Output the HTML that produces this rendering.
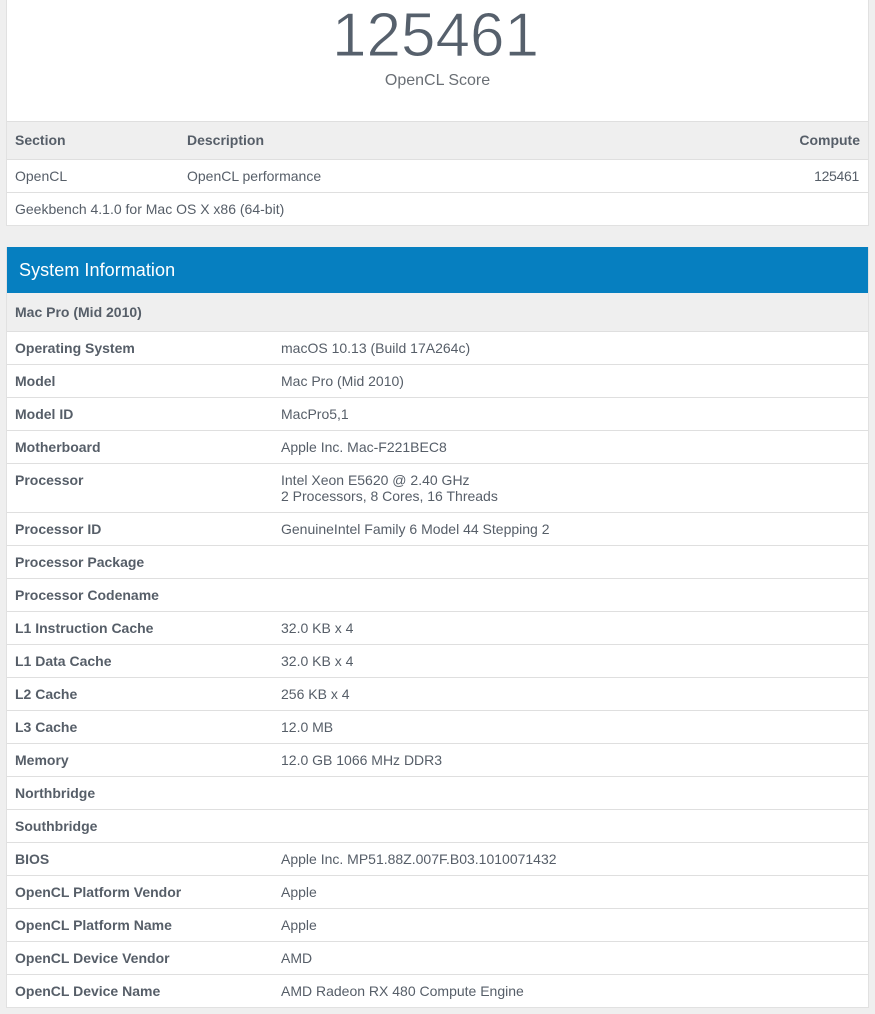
<!DOCTYPE html>
<html>
<head>
<meta charset="utf-8">
<style>
html,body{margin:0;padding:0;width:875px;height:1014px;overflow:hidden;background:#efefef;}
body{position:relative;font-family:"Liberation Sans",sans-serif;font-size:14px;color:#565e68;}
.a{position:absolute;}
.box{left:6px;width:861px;background:#fff;border:1px solid #e1e1e1;}
.l{position:absolute;left:7px;width:861px;height:1px;background:#dfdfdf;}
.t{position:absolute;white-space:nowrap;line-height:16px;}
.b{font-weight:bold;}
.k{left:15px;font-weight:bold;}
.v{left:281px;}
</style>
</head>
<body>
<div class="a box" style="top:-2px;height:226px;"></div>
<div class="a box" style="top:247px;height:759px;"></div>

<div class="t" style="left:-2px;width:875px;text-align:center;top:5px;font-size:62px;line-height:62px;color:#56606c;-webkit-text-stroke:0.9px #fff;">125461</div>
<div class="t" style="left:0;width:875px;text-align:center;top:73px;font-size:16px;color:#6a6f75;">OpenCL Score</div>

<div class="a" style="left:7px;top:122px;width:861px;height:37px;background:#efefef;"></div>
<div class="l" style="top:121px;"></div>
<div class="l" style="top:159px;"></div>
<div class="l" style="top:192px;"></div>
<div class="t b" style="left:15px;top:132px;">Section</div>
<div class="t b" style="left:187px;top:132px;">Description</div>
<div class="t b" style="right:15px;top:132px;">Compute</div>
<div class="t" style="left:15px;top:168px;">OpenCL</div>
<div class="t" style="left:187px;top:168px;">OpenCL performance</div>
<div class="t" style="right:16px;top:168px;letter-spacing:-0.3px;">125461</div>
<div class="t" style="left:15px;top:201px;">Geekbench 4.1.0 for Mac OS X x86 (64-bit)</div>

<div class="a" style="left:7px;top:247px;width:861px;height:46px;background:#067fc0;"></div>
<div class="t" style="left:19px;top:259px;font-size:18px;line-height:22px;color:#fff;letter-spacing:0.06px;">System Information</div>
<div class="a" style="left:7px;top:293px;width:861px;height:38px;background:#efefef;"></div>
<div class="t b" style="left:15px;top:304px;">Mac Pro (Mid 2010)</div>

<div class="l" style="top:331px;"></div>
<div class="l" style="top:364px;"></div>
<div class="l" style="top:397px;"></div>
<div class="l" style="top:430px;"></div>
<div class="l" style="top:463px;"></div>
<div class="l" style="top:512px;"></div>
<div class="l" style="top:545px;"></div>
<div class="l" style="top:578px;"></div>
<div class="l" style="top:611px;"></div>
<div class="l" style="top:644px;"></div>
<div class="l" style="top:677px;"></div>
<div class="l" style="top:710px;"></div>
<div class="l" style="top:743px;"></div>
<div class="l" style="top:776px;"></div>
<div class="l" style="top:809px;"></div>
<div class="l" style="top:842px;"></div>
<div class="l" style="top:875px;"></div>
<div class="l" style="top:908px;"></div>
<div class="l" style="top:941px;"></div>
<div class="l" style="top:974px;"></div>

<div class="t k" style="top:340px;">Operating System</div><div class="t v" style="top:340px;">macOS 10.13 (Build 17A264c)</div>
<div class="t k" style="top:373px;">Model</div><div class="t v" style="top:373px;">Mac Pro (Mid 2010)</div>
<div class="t k" style="top:406px;">Model ID</div><div class="t v" style="top:406px;">MacPro5,1</div>
<div class="t k" style="top:439px;">Motherboard</div><div class="t v" style="top:439px;">Apple Inc. Mac-F221BEC8</div>
<div class="t k" style="top:472px;">Processor</div><div class="t v" style="top:472px;">Intel Xeon E5620 @ 2.40 GHz</div><div class="t v" style="top:488px;">2 Processors, 8 Cores, 16 Threads</div>
<div class="t k" style="top:521px;">Processor ID</div><div class="t v" style="top:521px;">GenuineIntel Family 6 Model 44 Stepping 2</div>
<div class="t k" style="top:554px;">Processor Package</div>
<div class="t k" style="top:587px;">Processor Codename</div>
<div class="t k" style="top:620px;">L1 Instruction Cache</div><div class="t v" style="top:620px;">32.0 KB x 4</div>
<div class="t k" style="top:653px;">L1 Data Cache</div><div class="t v" style="top:653px;">32.0 KB x 4</div>
<div class="t k" style="top:686px;">L2 Cache</div><div class="t v" style="top:686px;">256 KB x 4</div>
<div class="t k" style="top:719px;">L3 Cache</div><div class="t v" style="top:719px;">12.0 MB</div>
<div class="t k" style="top:752px;">Memory</div><div class="t v" style="top:752px;">12.0 GB 1066 MHz DDR3</div>
<div class="t k" style="top:785px;">Northbridge</div>
<div class="t k" style="top:818px;">Southbridge</div>
<div class="t k" style="top:851px;">BIOS</div><div class="t v" style="top:851px;">Apple Inc. MP51.88Z.007F.B03.1010071432</div>
<div class="t k" style="top:884px;">OpenCL Platform Vendor</div><div class="t v" style="top:884px;">Apple</div>
<div class="t k" style="top:917px;">OpenCL Platform Name</div><div class="t v" style="top:917px;">Apple</div>
<div class="t k" style="top:950px;">OpenCL Device Vendor</div><div class="t v" style="top:950px;">AMD</div>
<div class="t k" style="top:983px;">OpenCL Device Name</div><div class="t v" style="top:983px;">AMD Radeon RX 480 Compute Engine</div>
</body>
</html>
